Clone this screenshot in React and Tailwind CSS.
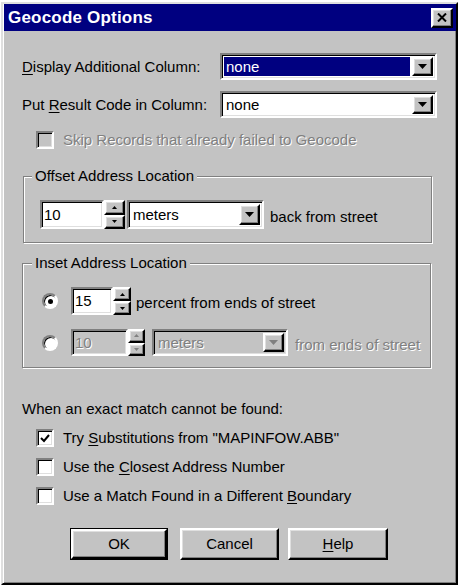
import React from 'react';

const sunken =
  'border-2 border-t-[#808080] border-l-[#808080] border-b-white border-r-white shadow-[inset_1px_1px_0_#000,inset_-1px_-1px_0_#dfdfdf]';
const raised =
  'border-2 border-t-white border-l-white border-b-black border-r-black shadow-[inset_-1px_-1px_0_#808080,inset_1px_1px_0_#dfdfdf]';
const dim = 'text-[#808080] [text-shadow:1px_1px_0_#fff]';

function Tri({ up, disabled, w = 9, h = 5 }) {
  const fill = disabled ? '#808080' : '#000';
  const pts = up ? `0,${h} ${w / 2},0 ${w},${h}` : `0,0 ${w},0 ${w / 2},${h}`;
  return (
    <svg width={w} height={h} viewBox={`0 0 ${w} ${h}`}>
      <polygon points={pts} fill={fill} />
    </svg>
  );
}

function DropButton({ disabled }) {
  return (
    <div className={`${raised} w-[21px] h-full bg-[#c3c3c3] flex items-center justify-center`}>
      <Tri disabled={disabled} />
    </div>
  );
}

function Spin({ className, disabled }) {
  return (
    <div className={`${className} flex flex-col`}>
      <div className={`${raised} flex-1 bg-[#c3c3c3] flex items-center justify-center`}>
        <Tri up w={5} h={3} disabled={disabled} />
      </div>
      <div className={`${raised} flex-1 bg-[#c3c3c3] flex items-center justify-center`}>
        <Tri w={5} h={3} disabled={disabled} />
      </div>
    </div>
  );
}

function Check({ checked, disabled }) {
  return (
    <div className={`${sunken} w-[18px] h-[18px] ${disabled ? 'bg-[#c3c3c3]' : 'bg-white'} flex items-center justify-center`}>
      {checked && (
        <svg width="10" height="9" viewBox="0 0 10 9">
          <path d="M1 4 L4 7 L9 1" stroke="#000" strokeWidth="2" fill="none" />
        </svg>
      )}
    </div>
  );
}

function Radio({ on }) {
  return (
    <div className="w-[16px] h-[16px] rounded-full border-2 border-t-[#808080] border-l-[#808080] border-b-white border-r-white bg-white shadow-[inset_1px_1px_0_#000] flex items-center justify-center">
      {on && <div className="w-[5px] h-[5px] rounded-full bg-black" />}
    </div>
  );
}

function U({ children }) {
  return <span className="underline underline-offset-2">{children}</span>;
}

export default function App() {
  return (
    <div className="w-[460px] h-[586px] bg-white pt-[2px] pl-[1px] font-['Liberation_Sans',Arial,sans-serif] text-[15px] leading-[18px] text-black">
      <div className="w-[457px] h-[583px] bg-[#c3c3c3] border-2 border-t-[#dfdfdf] border-l-[#dfdfdf] border-b-black border-r-black shadow-[inset_1px_1px_0_#fff,inset_-1px_-1px_0_#808080] pl-[1px]">
        {/* title bar */}
        <div className="h-[27px] bg-[#000080] flex items-center justify-between pl-[4px] pr-[3px]">
          <span className="text-white font-bold text-[17px] tracking-[0.2px]">Geocode Options</span>
          <div className={`${raised} w-[22px] h-[20px] bg-[#c3c3c3] flex items-center justify-center`}>
            <svg width="10" height="9" viewBox="0 0 10 9">
              <path d="M1 0.5 L9 8.5 M9 0.5 L1 8.5" stroke="#000" strokeWidth="2" />
            </svg>
          </div>
        </div>

        <div className="pl-[18px]">
          <div className="mt-[22px] flex items-center h-[27px]">
            <span className="w-[198px]">
              <U>D</U>isplay Additional Column:
            </span>
            <div className={`${sunken} w-[217px] h-[27px] bg-white flex p-[2px]`}>
              <div className="flex-1 bg-[#000080] text-white pl-[2px] flex items-center mr-[2px]">none</div>
              <DropButton />
            </div>
          </div>

          <div className="mt-[11px] flex items-center h-[27px]">
            <span className="w-[198px]">
              Put <U>R</U>esult Code in Column:
            </span>
            <div className={`${sunken} w-[217px] h-[27px] bg-white flex p-[2px]`}>
              <div className="flex-1 pl-[2px] flex items-center">none</div>
              <DropButton />
            </div>
          </div>

          <div className="mt-[11px] h-[22px] flex items-center ml-[14px] gap-[9px]">
            <Check disabled />
            <span className={dim}>Skip Records that already failed to Geocode</span>
          </div>

          {/* offset group */}
          <div className="relative ml-[1px] mt-[25px] w-[409px] h-[67px] border border-[#808080] shadow-[1px_1px_0_#fff,inset_1px_1px_0_#fff]">
            <span className="absolute left-[8px] -top-[10px] bg-[#c3c3c3] px-[3px]">Offset Address Location</span>
            <div className="mt-[23px] ml-[16px] h-[29px] flex items-center">
              <div className={`${sunken} w-[64px] h-full bg-white pl-[2px] flex items-center`}>10</div>
              <Spin className="w-[21px] h-full" />
              <div className={`${sunken} ml-[2px] w-[137px] h-full bg-white flex p-[2px]`}>
                <div className="flex-1 pl-[2px] flex items-center">meters</div>
                <DropButton />
              </div>
              <span className="ml-[6px] mt-[4px]">back from street</span>
            </div>
          </div>

          {/* inset group */}
          <div className="relative ml-[0px] mt-[20px] w-[409px] h-[105px] border border-[#808080] shadow-[1px_1px_0_#fff,inset_1px_1px_0_#fff]">
            <span className="absolute left-[9px] -top-[10px] bg-[#c3c3c3] px-[3px]">Inset Address Location</span>
            <div className="mt-[23px] ml-[19px] h-[28px] flex items-center">
              <Radio on />
              <div className={`${sunken} ml-[13px] w-[42px] h-full bg-white pl-[2px] flex items-center`}>15</div>
              <Spin className="w-[18px] h-full" />
              <span className="ml-[5px] mt-[4px]">percent from ends of street</span>
            </div>
            <div className="mt-[14px] ml-[19px] h-[27px] flex items-center">
              <Radio />
              <div className={`${sunken} ml-[13px] w-[57px] h-full bg-[#c3c3c3] pl-[2px] flex items-center ${dim}`}>10</div>
              <Spin className="w-[17px] h-full" disabled />
              <div className={`${sunken} ml-[7px] w-[136px] h-full bg-[#c3c3c3] flex p-[2px]`}>
                <div className={`flex-1 pl-[2px] flex items-center ${dim}`}>meters</div>
                <DropButton disabled />
              </div>
              <span className={`ml-[7px] mt-[4px] ${dim}`}>from ends of street</span>
            </div>
          </div>

          <div className="mt-[32px]">When an exact match cannot be found:</div>

          <div className="mt-[11px] ml-[14px] flex flex-col gap-[11px]">
            <div className="h-[18px] flex items-center gap-[9px]">
              <Check checked />
              <span>
                Try <U>S</U>ubstitutions from "MAPINFOW.ABB"
              </span>
            </div>
            <div className="h-[18px] flex items-center gap-[9px]">
              <Check />
              <span>
                Use the <U>C</U>losest Address Number
              </span>
            </div>
            <div className="h-[18px] flex items-center gap-[9px]">
              <Check />
              <span>
                Use a Match Found in a Different <U>B</U>oundary
              </span>
            </div>
          </div>

          <div className="mt-[23px] ml-[48px] flex">
            <div className="w-[98px] h-[32px] border border-black">
              <div className={`${raised} w-full h-full flex items-center justify-center`}>OK</div>
            </div>
            <div className={`${raised} ml-[12px] w-[99px] h-[32px] flex items-center justify-center`}>Cancel</div>
            <div className={`${raised} ml-[9px] w-[100px] h-[32px] flex items-center justify-center`}>
              <span>
                <U>H</U>elp
              </span>
            </div>
          </div>
        </div>
      </div>
    </div>
  );
}
